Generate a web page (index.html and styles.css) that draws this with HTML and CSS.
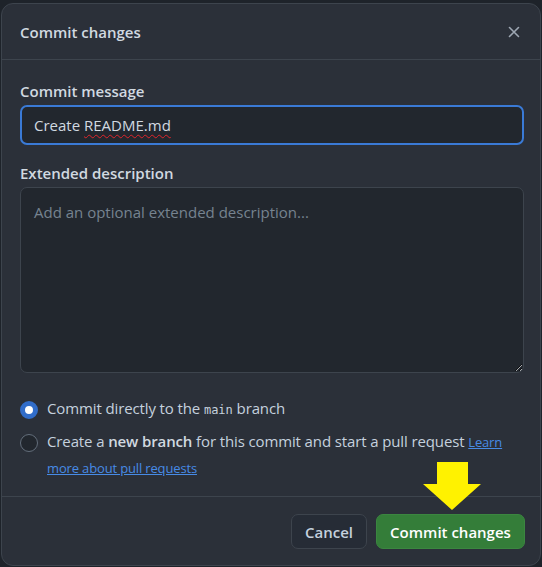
FILE: index.html
```html
<!DOCTYPE html>
<html lang="en">
<head>
<meta charset="utf-8">
<title>Commit changes</title>
<link rel="stylesheet" href="styles.css">
</head>
<body>
<div class="dialog" role="dialog" aria-labelledby="dlg-title">
  <header class="dlg-header">
    <h2 id="dlg-title" class="dlg-title">Commit changes</h2>
    <button class="close-btn" aria-label="Close">
      <svg width="12" height="12" viewBox="0 0 12 12" aria-hidden="true"><path d="M1.5 1.5 L10.5 10.5 M10.5 1.5 L1.5 10.5" stroke="currentColor" stroke-width="1.6" stroke-linecap="round" fill="none"/></svg>
    </button>
  </header>
  <div class="dlg-body">
    <label class="field-label">Commit message</label>
    <div class="text-input focused">Create <span class="misspelled">README.md</span></div>
    <label class="field-label second">Extended description</label>
    <textarea class="text-area" placeholder="Add an optional extended description..."></textarea>
    <div class="radio-group">
      <div class="radio-row">
        <span class="radio checked"></span>
        <span class="radio-text">Commit directly to the <code class="branch">main</code> branch</span>
      </div>
      <div class="radio-row">
        <span class="radio"></span>
        <span class="radio-text">Create a <strong>new branch</strong> for this commit and start a pull request <a href="#" class="link">Learn more about pull requests</a></span>
      </div>
    </div>
  </div>
  <footer class="dlg-footer">
    <button class="btn btn-default">Cancel</button>
    <button class="btn btn-primary">Commit changes</button>
  </footer>
  <svg class="arrow" width="60" height="50" viewBox="0 0 60 50" aria-hidden="true">
    <polygon points="14,0 45,0 45,22 58,22 29,48 0,22 14,22" fill="#fff200"/>
  </svg>
</div>
</body>
</html>
```
FILE: styles.css
```css
* { box-sizing: border-box; }
html, body { margin: 0; padding: 0; }
body {
  background: #1e232a;
  font-family: "Open Sans", "Noto Sans", sans-serif;
  color: #cdd9e5;
  width: 542px;
  height: 567px;
  overflow: hidden;
  color-scheme: dark;
}
.dialog {
  position: relative;
  margin: 3px 1px 0 1px;
  width: 540px;
  height: 563px;
  background: #2b3039;
  border: 1px solid #3d444d;
  border-radius: 12px;
  display: flex;
  flex-direction: column;
}
.dlg-header {
  height: 56px;
  border-bottom: 1px solid #3d444d;
  display: flex;
  align-items: center;
  justify-content: space-between;
  padding: 0 16px 0 18px;
}
.dlg-title {
  margin: 0;
  font-size: 15px;
  font-weight: 600;
  color: #d1d9e0;
}
.close-btn {
  background: none;
  border: 0;
  padding: 0;
  width: 20px;
  height: 20px;
  display: flex;
  align-items: center;
  justify-content: center;
  color: #9ea7b3;
}
.dlg-body {
  padding: 21px 16px 15px 18px;
  flex: 1;
}
.field-label {
  display: block;
  font-size: 15px;
  font-weight: 600;
  line-height: 20px;
  color: #d1d9e0;
  margin-bottom: 4px;
}
.field-label.second { margin-top: 18px; }
.text-input {
  height: 40px;
  background: #22272e;
  border: 2px solid #3a7ad6;
  border-radius: 7px;
  padding: 0 12px;
  display: flex;
  align-items: center;
  font-size: 15px;
  color: #d1d9e0;
  white-space: pre;
}
.misspelled {
  text-decoration: underline wavy #e0252b;
  text-decoration-thickness: 1px;
  text-underline-offset: 3px;
}
.text-area {
  display: block;
  width: 100%;
  height: 186px;
  background: #22272e;
  border: 1px solid #3d444d;
  border-radius: 7px;
  padding: 14px 13px;
  font-family: inherit;
  font-size: 15px;
  color: #d1d9e0;
  resize: vertical;
  outline: none;
}
.text-area::placeholder { color: #768390; }
.radio-group {
  margin-top: 23px;
  display: flex;
  flex-direction: column;
  gap: 6px;
}
.radio-row {
  display: flex;
  align-items: flex-start;
  gap: 9px;
}
.radio {
  flex: none;
  width: 18px;
  height: 18px;
  margin-top: 5px;
  border-radius: 50%;
  border: 1px solid #636e7b;
  background: #22272e;
}
.radio.checked {
  border: 5px solid #316dca;
  background: #ffffff;
}
.radio-text {
  font-size: 15px;
  line-height: 25px;
  color: #c5d1de;
  letter-spacing: -0.12px;
}
.radio-text strong { font-weight: 600; color: #d1d9e0; }
.branch {
  font-family: "DejaVu Sans Mono", monospace;
  font-size: 12px;
  letter-spacing: 0;
}
.link {
  color: #478be6;
  font-size: 13px;
  letter-spacing: -0.15px;
  text-decoration: underline;
}
.dlg-footer {
  border-top: 1px solid #3d444d;
  padding: 17px 15px 16px 16px;
  display: flex;
  justify-content: flex-end;
  gap: 9px;
}
.btn {
  height: 35px;
  border-radius: 7px;
  font-family: inherit;
  font-size: 15px;
  font-weight: 600;
  padding: 0 10px;
  white-space: nowrap;
}
.btn-default {
  background: #262c36;
  border: 1px solid #3d444d;
  color: #c5d1de;
  width: 76px;
}
.btn-primary {
  background: #347d39;
  border: 1px solid #3b8640;
  color: #ffffff;
  width: 149px;
}
.arrow {
  position: absolute;
  left: 421px;
  top: 458px;
}
```
